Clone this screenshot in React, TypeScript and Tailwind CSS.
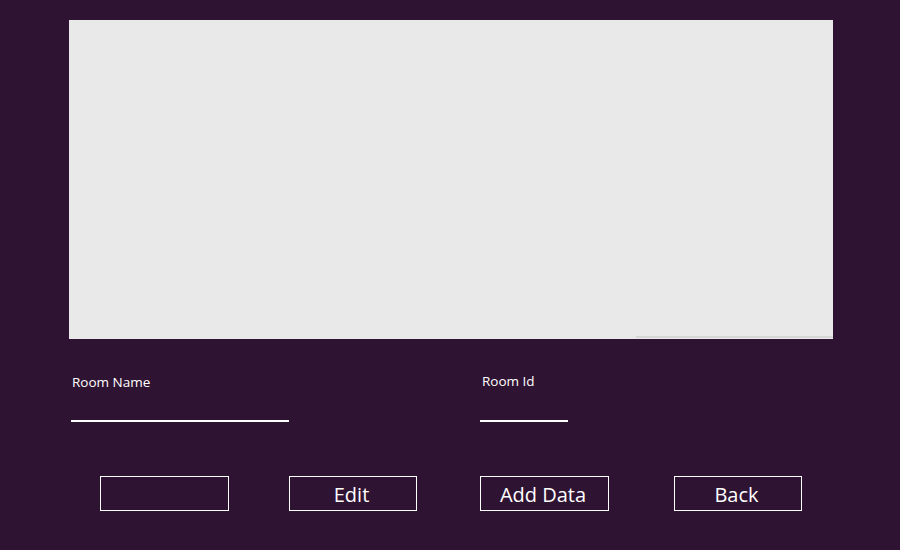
const buttons = [
  { label: "", ml: "ml-[100px]" },
  { label: "Edit", ml: "ml-[60px]" },
  { label: "Add Data", ml: "ml-[63px]" },
  { label: "Back", ml: "ml-[65px]" },
]

export default function App() {
  return (
    <div
      className="w-[900px] h-[550px] bg-[#2f1332] overflow-hidden text-white"
      style={{ fontFamily: '"Open Sans", "Noto Sans", sans-serif' }}
    >
      <div className="pt-[20px] pl-[69px]">
        <div className="w-[764px] h-[319px] bg-[#e9e9e9] flex flex-col justify-end items-end">
          <div className="w-[197px] h-[2px] bg-[#d6d6d6] mb-[1px]" />
        </div>
      </div>

      <div className="flex mt-[35px]">
        <div className="ml-[71px] w-[218px]">
          <div className="text-[13.5px] leading-[16px] pl-[1px]">Room Name</div>
          <div className="mt-[30px] h-[2px] bg-white" />
        </div>
        <div className="ml-[191px] w-[88px]">
          <div className="text-[13.5px] leading-[16px] pl-[2px] -mt-[1px]">Room Id</div>
          <div className="mt-[31px] h-[2px] bg-white" />
        </div>
      </div>

      <div className="flex mt-[54px]">
        {buttons.map((b, i) => (
          <button
            key={i}
            className={`${b.ml} ${i % 2 === 0 ? "w-[129px]" : "w-[128px]"} h-[35px] border border-white text-[20px] leading-[33px] text-center pt-[1px] pr-[3px]`}
          >
            {b.label}
          </button>
        ))}
      </div>
    </div>
  )
}
